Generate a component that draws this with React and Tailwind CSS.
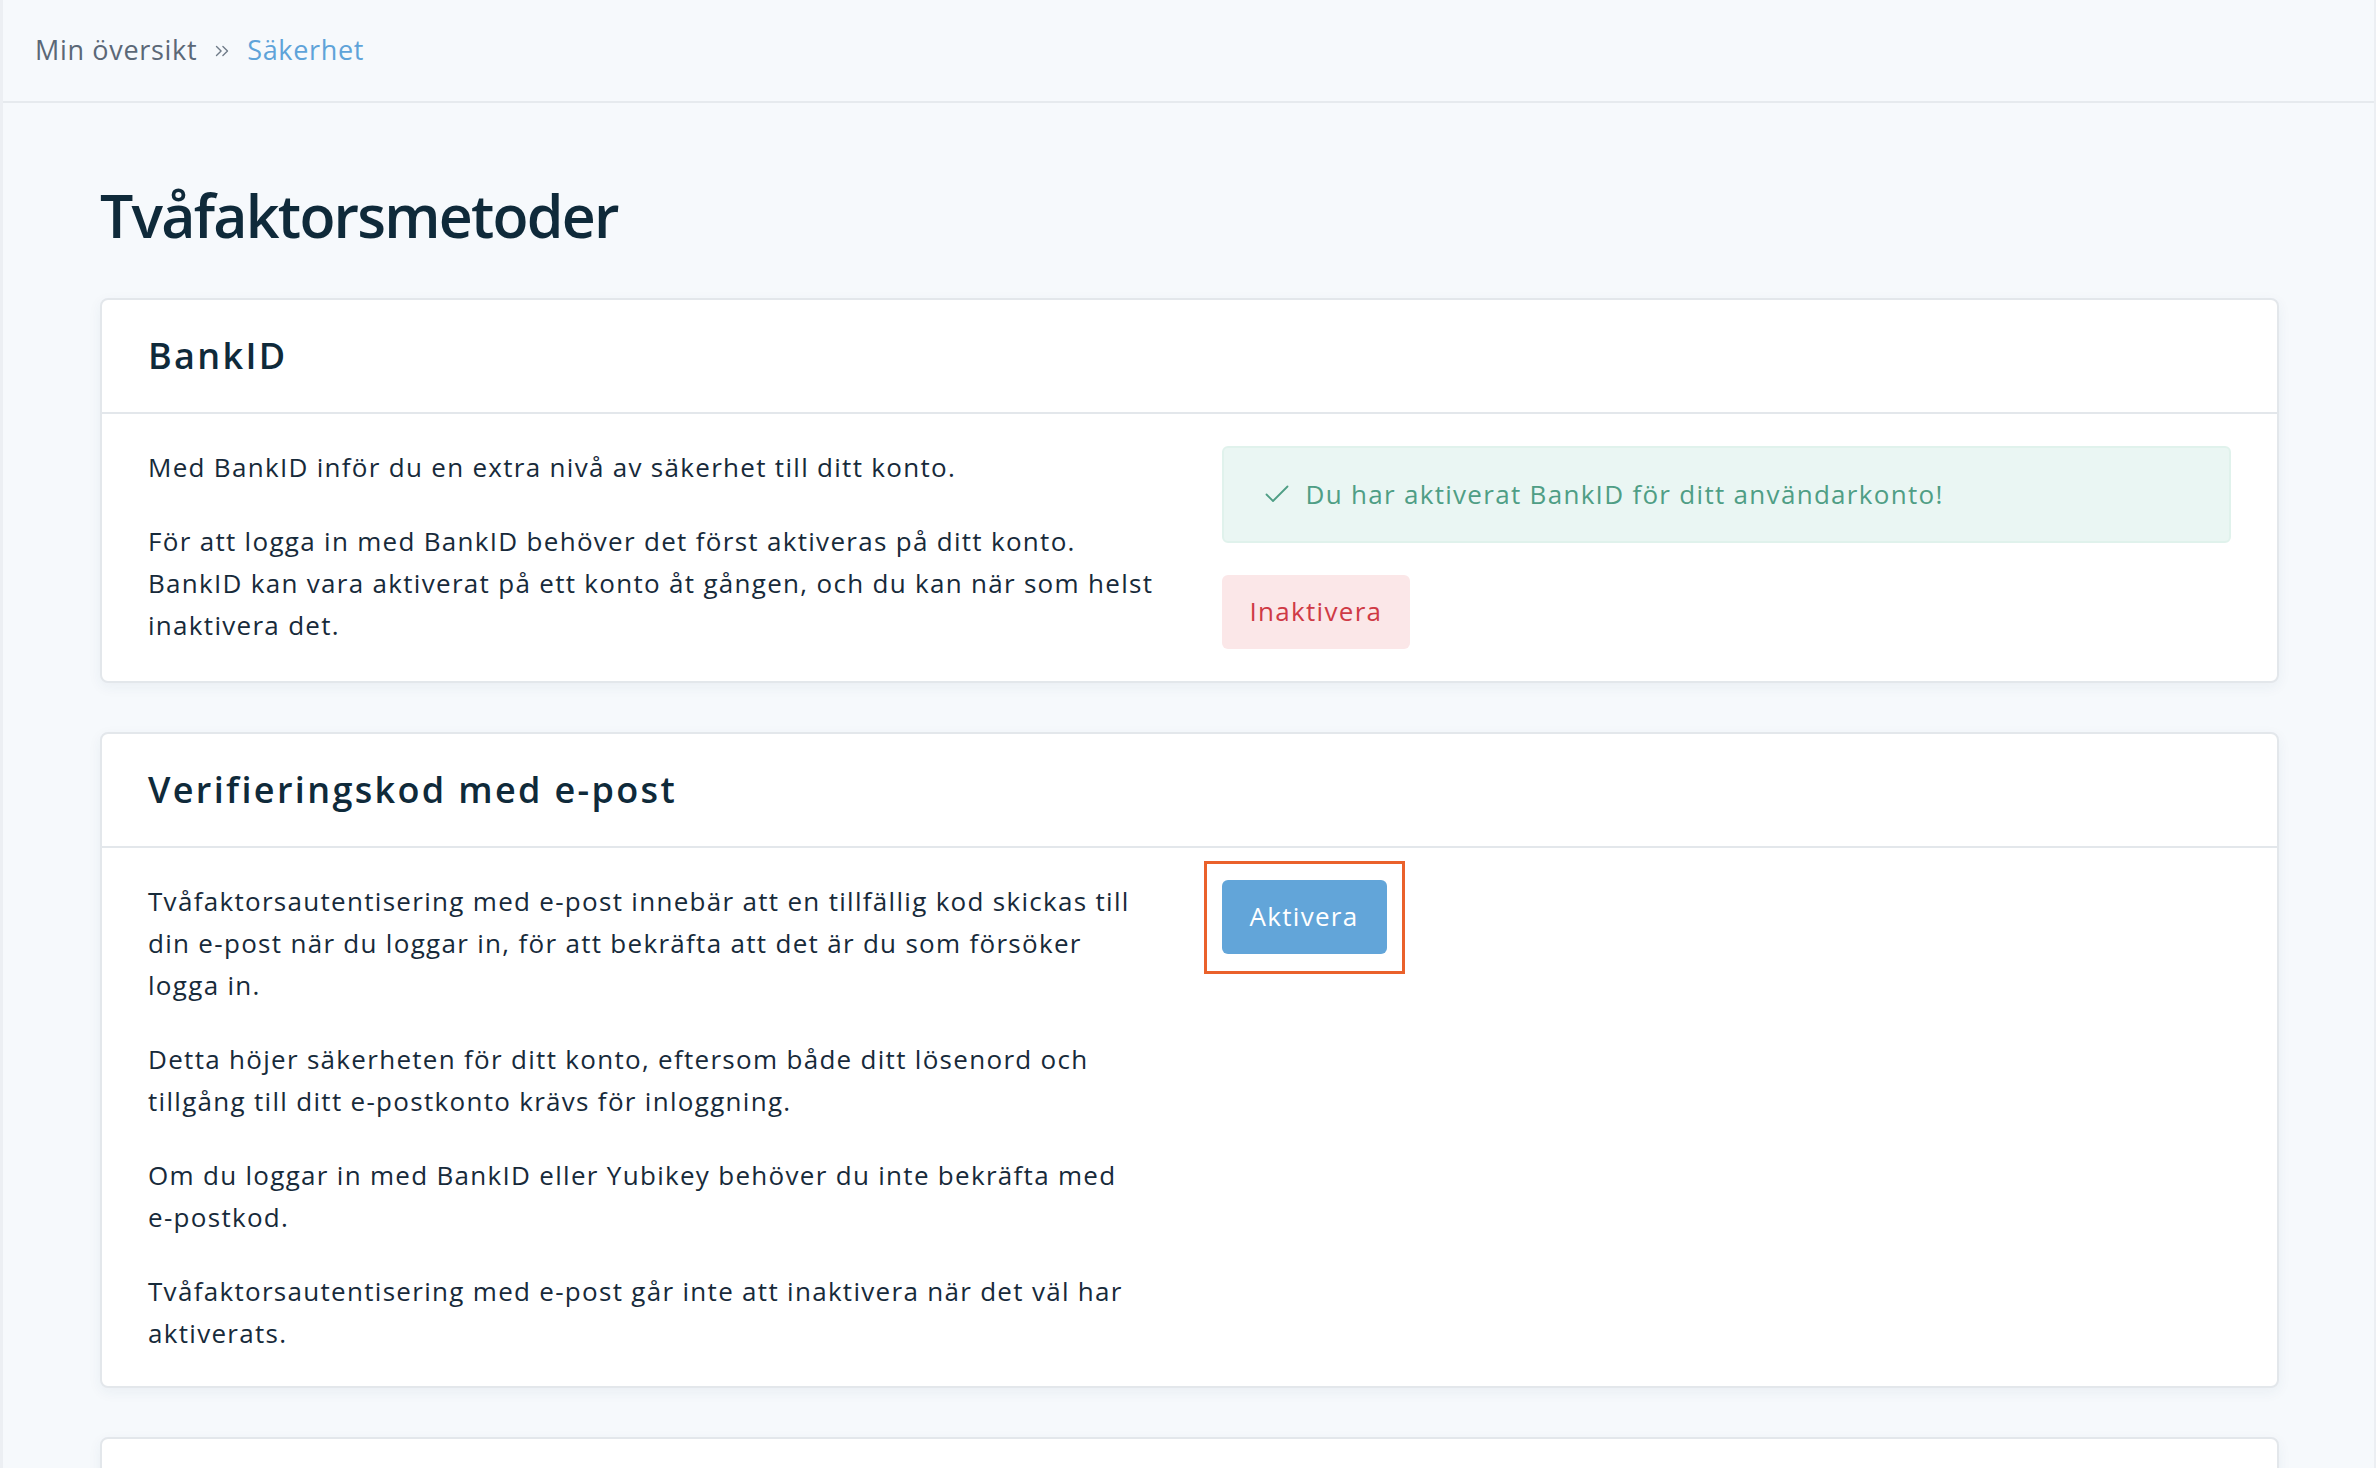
import React from "react";
import { ChevronsRight } from "lucide-react";

const Check = () => (
  <svg width="24" height="18" viewBox="0 0 24 18" fill="none" className="shrink-0">
    <path d="M1.5 9.5 L8 16 L22.5 1.5" stroke="#4f9e85" strokeWidth="1.8" strokeLinecap="round" strokeLinejoin="round" />
  </svg>
);

const Card = ({ title, children }) => (
  <section className="bg-white border-2 border-[#e3e7eb] rounded-lg shadow-[0_4px_14px_rgba(30,60,110,0.06)]">
    <div className="h-[114px] flex items-center px-[46px] border-b-2 border-[#e3e7eb]">
      <h2 className="text-[36px] font-semibold tracking-[0.065em] text-[#0f2a3a]">{title}</h2>
    </div>
    <div className="grid grid-cols-2 gap-16 px-[46px] py-8">{children}</div>
  </section>
);

const App = () => {
  return (
    <div
      className="min-h-screen bg-[#f6f9fc] border-l-[3px] border-r-2 border-[#eceff3] text-[#172a3a]"
      style={{ fontFamily: "'Open Sans', Lato, sans-serif" }}
    >
      <header className="h-[103px] flex items-center px-8 border-b-2 border-[#e6eaee]">
        <nav className="flex items-center text-[27px] tracking-[0.025em]">
          <span className="text-[#5b6877]">Min översikt</span>
          <ChevronsRight size={22} strokeWidth={1.5} className="mx-[14px] text-[#6f7b88]" />
          <span className="text-[#5ea3d9]">Säkerhet</span>
        </nav>
      </header>

      <main className="pl-[97px] pr-[95px] pt-[77px] pb-10">
        <h1 className="text-[59px] leading-[1.2] font-semibold tracking-[-0.03em] text-[#0f2a3a] mb-[47px]">
          Tvåfaktorsmetoder
        </h1>

        <div className="flex flex-col gap-[49px]">
          <Card title="BankID">
            <div className="flex flex-col gap-8 text-[26px] leading-[42px] tracking-[0.05em]">
              <p>Med BankID inför du en extra nivå av säkerhet till ditt konto.</p>
              <p>
                För att logga in med BankID behöver det först aktiveras på ditt konto. BankID kan vara aktiverat på ett
                konto åt gången, och du kan när som helst inaktivera det.
              </p>
            </div>
            <div className="flex flex-col items-start gap-8">
              <div className="w-full h-[97px] flex items-center gap-[17px] pl-[41px] bg-[#eaf6f3] border-2 border-[#e0f2ec] rounded-md text-[26px] tracking-[0.05em] text-[#4f9e85]">
                <Check />
                <span>Du har aktiverat BankID för ditt användarkonto!</span>
              </div>
              <button className="h-[74px] px-7 rounded-md bg-[#fbe7e8] text-[#cf3a45] text-[26px] tracking-[0.05em]">
                Inaktivera
              </button>
            </div>
          </Card>

          <Card title="Verifieringskod med e-post">
            <div className="flex flex-col gap-8 text-[26px] leading-[42px] tracking-[0.05em]">
              <p>
                Tvåfaktorsautentisering med e-post innebär att en tillfällig kod skickas till din e-post när du loggar
                in, för att bekräfta att det är du som försöker logga in.
              </p>
              <p>
                Detta höjer säkerheten för ditt konto, eftersom både ditt lösenord och tillgång till ditt e-postkonto
                krävs för inloggning.
              </p>
              <p>
                Om du loggar in med BankID eller Yubikey behöver du inte bekräfta med{" "}
                <span className="whitespace-nowrap">e-postkod.</span>
              </p>
              <p>Tvåfaktorsautentisering med e-post går inte att inaktivera när det väl har aktiverats.</p>
            </div>
            <div className="flex items-start">
              <div className="-ml-[18px] -mt-[19px] border-[3px] border-[#ea612b] px-[15px] pt-4 pb-[17px]">
                <button className="h-[74px] px-7 rounded-md bg-[#62a5d9] text-white text-[26px] tracking-[0.05em]">
                  Aktivera
                </button>
              </div>
            </div>
          </Card>

          {/* next method card, only its top edge shows */}
          <Card>
            <div className="h-10" />
          </Card>
        </div>
      </main>
    </div>
  );
};

export default App;
